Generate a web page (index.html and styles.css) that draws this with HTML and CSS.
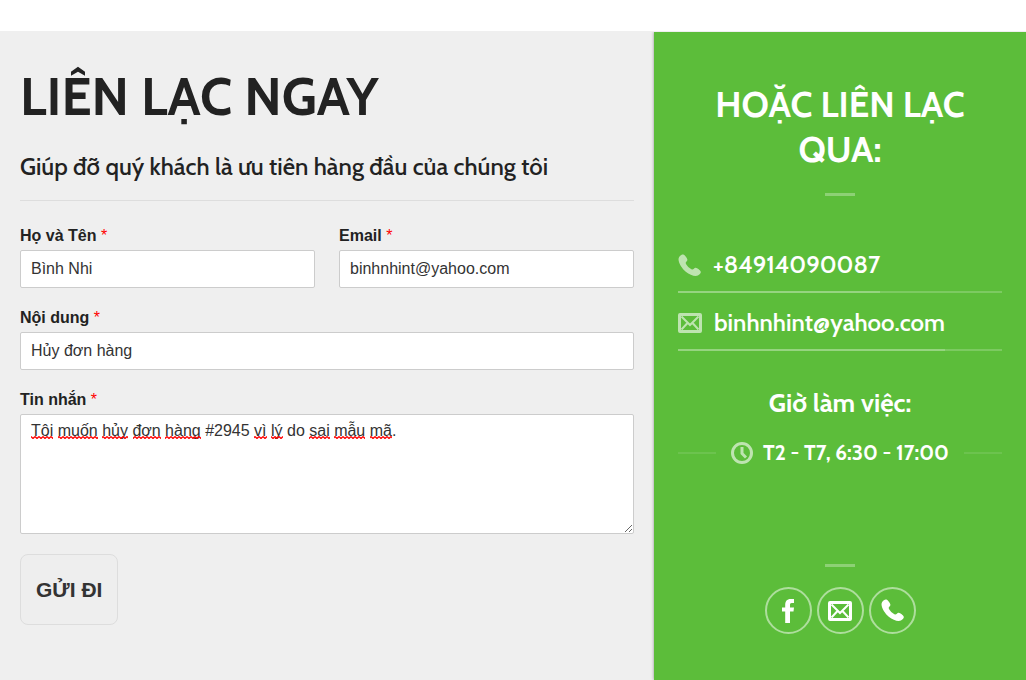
FILE: index.html
```html
<!DOCTYPE html>
<html lang="vi">
<head>
    <meta charset="UTF-8">
    <meta name="viewport" content="width=device-width, initial-scale=1">
    <title>Liên lạc ngay</title>
    <link rel="stylesheet" href="styles.css">
</head>
<body>
    <!-- Shared icons -->
    <svg class="sprite" aria-hidden="true">
        <symbol id="icon-phone" viewBox="0 0 24 24">
            <path d="M1.200 3C2.500 1.200 4.200.2 5.600.6c1.600.6 4 3.900 4.200 5.400.2 1.400-1.900 2.200-1.800 3.500.2 2.100 4.700 6.500 6.900 6.700 1.300.1 2.200-2.200 3.600-1.900 1.700.3 4.900 2.700 5.300 4.200.3 1.400-1.400 3.200-3 4-2.900 1.400-8.200-.3-12.700-3.900C3.700 15-1.300 7 1.200 3z"/>
        </symbol>
        <symbol id="icon-mail" viewBox="0 0 24 20">
            <path fill-rule="evenodd" d="M2 0h20A2 2 0 0 1 24 2v16a2 2 0 0 1-2 2H2A2 2 0 0 1 0 18V2A2 2 0 0 1 2 0zM3 3v14h18V3z"/>
            <path d="M3.500 3.500L12 12l8.500-8.500M3.500 16.500l6-6.500M20.500 16.500l-6-6.500" fill="none" stroke="currentColor" stroke-width="2"/>
        </symbol>
        <symbol id="icon-clock" viewBox="0 0 22 22">
            <circle cx="11" cy="11" r="9.500" fill="none" stroke="currentColor" stroke-width="3"/>
            <path d="M11 5v6.500l4 4" fill="none" stroke="currentColor" stroke-width="3"/>
        </symbol>
        <symbol id="icon-facebook" viewBox="0 0 12 24">
            <path d="M3.200 24V12.500H0v-4h3.200V6C3.200 2.200 5 0 8.500 0H12v4H9.800C8.300 4 8 4.700 8 6v2.500h4l-.5 4H8V24z"/>
        </symbol>
    </svg>

    <main class="contact">
        <section class="form-panel">
            <h1>LIÊN LẠC NGAY</h1>
            <h2>Giúp đỡ quý khách là ưu tiên hàng đầu của chúng tôi</h2>

            <form class="contact-form">
                <div class="field-row">
                    <div class="field">
                        <label for="name">Họ và Tên <span class="required">*</span></label>
                        <input type="text" id="name" value="Bình Nhi">
                    </div>
                    <div class="field">
                        <label for="email">Email <span class="required">*</span></label>
                        <input type="email" id="email" value="binhnhint@yahoo.com">
                    </div>
                </div>
                <div class="field">
                    <label for="subject">Nội dung <span class="required">*</span></label>
                    <input type="text" id="subject" value="Hủy đơn hàng">
                </div>
                <div class="field">
                    <label for="message">Tin nhắn <span class="required">*</span></label>
                    <div class="message-box">
                        <textarea id="message" spellcheck="false">Tôi muốn hủy đơn hàng #2945 vì lý do sai mẫu mã.</textarea>
                        <!-- Spelling marks under the words of the message -->
                        <svg class="spelling" width="362" height="3" aria-hidden="true">
                            <defs>
                                <pattern id="wave" width="4" height="3" patternUnits="userSpaceOnUse">
                                    <path d="M0 0.500L2 2.500L4 0.500" fill="none" stroke="#f00" stroke-width="1.300"/>
                                </pattern>
                            </defs>
                            <g fill="url(#wave)">
                                <rect x="0" width="22" height="3"/>
                                <rect x="27" width="40" height="3"/>
                                <rect x="71" width="26" height="3"/>
                                <rect x="102" width="28" height="3"/>
                                <rect x="134" width="36" height="3"/>
                                <rect x="223" width="13" height="3"/>
                                <rect x="240" width="12" height="3"/>
                                <rect x="278" width="21" height="3"/>
                                <rect x="303" width="31" height="3"/>
                                <rect x="339" width="22" height="3"/>
                            </g>
                        </svg>
                    </div>
                </div>
                <button type="submit">GỬI ĐI</button>
            </form>
        </section>

        <aside class="info-panel">
            <h2>HOẶC LIÊN LẠC QUA:</h2>
            <div class="divider"></div>

            <ul class="contact-list">
                <li>
                    <a href="tel:+84914090087"><svg class="icon"><use href="#icon-phone"/></svg>+84914090087</a>
                </li>
                <li>
                    <a href="mailto:binhnhint@yahoo.com"><svg class="icon icon-mail"><use href="#icon-mail"/></svg>binhnhint@yahoo.com</a>
                </li>
            </ul>

            <h3>Giờ làm việc:</h3>
            <p class="hours"><svg class="icon icon-clock"><use href="#icon-clock"/></svg>T2 - T7, 6:30 - 17:00</p>

            <div class="divider"></div>
            <div class="social">
                <a href="#" aria-label="Facebook"><svg class="icon-facebook"><use href="#icon-facebook"/></svg></a>
                <a href="mailto:binhnhint@yahoo.com" aria-label="Email"><svg class="icon-mail"><use href="#icon-mail"/></svg></a>
                <a href="tel:+84914090087" aria-label="Phone"><svg class="icon-phone"><use href="#icon-phone"/></svg></a>
            </div>
        </aside>
    </main>
</body>
</html>
```
FILE: styles.css
```css
* {
    box-sizing: border-box;
}

body {
    margin: 0;
    padding-top: 31px;
    min-height: 100vh;
    display: flex;
    background-color: #fff;
    color: #222;
    font-family: "Liberation Sans", Arial, sans-serif;
    font-size: 16px;
}

h1, h2, h3, p, ul {
    margin: 0;
    padding: 0;
}

h1, h2, h3,
.info-panel {
    font-family: Cabin, Lato, sans-serif;
    font-weight: bold;
}

svg {
    fill: currentColor;
}

.sprite {
    position: absolute;
    width: 0;
    height: 0;
}

.contact {
    flex: 1;
    display: grid;
    grid-template-columns: 1fr 372px;
    background-color: #efefef;
}

/* Form side */
.form-panel {
    padding: 31px 20px 20px;
}

.form-panel h1 {
    font-size: 53px;
    line-height: 68px;
}

.form-panel h2 {
    margin-top: 21px;
    padding-bottom: 17px;
    border-bottom: 1px solid #ddd;
    font-size: 24px;
    font-weight: 500;
    line-height: 32px;
}

.contact-form {
    display: flex;
    flex-direction: column;
    gap: 20px;
    padding-top: 25px;
}

.field-row {
    display: grid;
    grid-template-columns: 1fr 1fr;
    gap: 24px;
}

.field {
    display: flex;
    flex-direction: column;
    gap: 4px;
}

.field label {
    font-weight: bold;
    line-height: 20px;
}

.required {
    color: #f00;
    font-weight: normal;
}

.field input,
.field textarea {
    display: block;
    width: 100%;
    height: 38px;
    padding: 6px 10px;
    border: 1px solid #ccc;
    border-radius: 2px;
    background-color: #fff;
    color: #333;
    font: inherit;
    line-height: 20px;
}

.field textarea {
    height: 120px;
}

.message-box {
    position: relative;
}

.spelling {
    position: absolute;
    top: 22px;
    left: 11px;
    pointer-events: none;
}

.contact-form button {
    align-self: flex-start;
    height: 71px;
    padding: 0 15px;
    border: 1px solid #ddd;
    border-radius: 8px;
    background-color: #eee;
    color: #333;
    font: bold 21px "Liberation Sans", Arial, sans-serif;
}

/* Contact side */
.info-panel {
    display: flex;
    flex-direction: column;
    align-items: center;
    margin-top: 1px;
    padding: 50px 24px 40px;
    background-color: #5cbd3a;
    box-shadow: 0 0 3px rgba(0, 0, 0, 0.4);
    color: #fff;
    clip-path: inset(0 0 0 -4px);
}

.info-panel a {
    color: inherit;
    text-decoration: none;
}

.info-panel h2 {
    max-width: 280px;
    font-size: 36px;
    line-height: 45px;
    text-align: center;
}

.divider {
    width: 30px;
    height: 3px;
    margin-top: 21px;
    background-color: rgba(255, 255, 255, 0.3);
}

.contact-list {
    align-self: stretch;
    margin-top: 43px;
    list-style: none;
    font-size: 24px;
    font-weight: 600;
    line-height: 52px;
}

.contact-list li {
    margin-bottom: 4px;
    border-bottom: 2px solid rgba(255, 255, 255, 0.2);
}

/* The link's own line lies on the line of its row */
.contact-list a {
    display: inline-flex;
    align-items: center;
    gap: 12px;
    height: 54px;
    margin-bottom: -2px;
    border-bottom: 2px solid rgba(255, 255, 255, 0.2);
    vertical-align: top;
}

.icon {
    width: 23px;
    height: 23px;
    opacity: 0.6;
}

.icon-mail {
    width: 24px;
    height: 20px;
}

.info-panel h3 {
    margin-top: 32px;
    font-size: 26px;
    line-height: 32px;
}

.hours {
    align-self: stretch;
    display: flex;
    align-items: center;
    margin-top: 18px;
    font-size: 21px;
    line-height: 32px;
}

.hours::before,
.hours::after {
    content: "";
    flex: 1;
    height: 2px;
    background-color: rgba(255, 255, 255, 0.1);
}

.hours::before {
    margin-right: 15px;
}

.hours::after {
    margin-left: 15px;
}

.icon-clock {
    width: 22px;
    height: 22px;
    margin-right: 10px;
}

.hours + .divider {
    margin-top: 95px;
}

.social {
    display: flex;
    gap: 5px;
    margin-top: 20px;
}

.social a {
    display: flex;
    align-items: center;
    justify-content: center;
    width: 47px;
    height: 47px;
    border: 2px solid rgba(255, 255, 255, 0.5);
    border-radius: 50%;
}

.icon-facebook {
    width: 12px;
    height: 24px;
}

.icon-phone {
    width: 23px;
    height: 23px;
}
```
